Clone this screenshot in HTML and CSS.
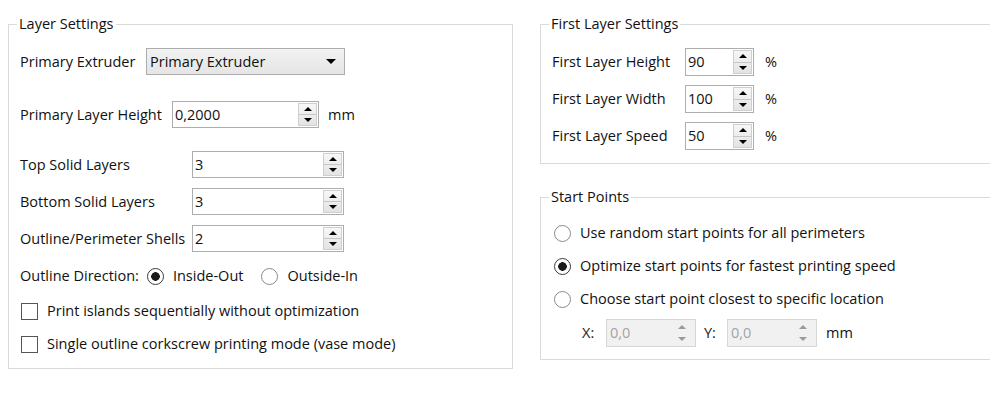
FILE: index.html
```html
<!DOCTYPE html>
<html>
<head>
    <title>Layer Settings</title>
    <meta charset="UTF-8">
    <link rel="stylesheet" href="styles.css">
</head>
<body>
    <div class="page">
        <fieldset class="group layer-group">
            <legend>Layer Settings</legend>

            <div class="row extruder-row">
                <span class="label label-extruder">Primary Extruder</span>
                <div class="combo">
                    <span class="combo-text">Primary Extruder</span>
                    <span class="combo-arrow"></span>
                </div>
            </div>

            <div class="row height-row">
                <span class="label label-height">Primary Layer Height</span>
                <div class="spin spin-height">
                    <span class="spin-value">0,2000</span>
                    <span class="spin-btns"><span class="up"></span><span class="down"></span></span>
                </div>
                <span class="unit">mm</span>
            </div>

            <div class="solid-grid">
                <span class="label">Top Solid Layers</span>
                <div class="spin">
                    <span class="spin-value">3</span>
                    <span class="spin-btns"><span class="up"></span><span class="down"></span></span>
                </div>
                <span class="label">Bottom Solid Layers</span>
                <div class="spin">
                    <span class="spin-value">3</span>
                    <span class="spin-btns"><span class="up"></span><span class="down"></span></span>
                </div>
                <span class="label">Outline/Perimeter Shells</span>
                <div class="spin">
                    <span class="spin-value">2</span>
                    <span class="spin-btns"><span class="up"></span><span class="down"></span></span>
                </div>
            </div>

            <div class="row direction-row">
                <span class="label">Outline Direction:</span>
                <span class="option"><span class="radio checked"></span>Inside-Out</span>
                <span class="option"><span class="radio"></span>Outside-In</span>
            </div>

            <div class="row check-row">
                <span class="checkbox"></span>
                <span>Print islands sequentially without optimization</span>
            </div>
            <div class="row check-row">
                <span class="checkbox"></span>
                <span>Single outline corkscrew printing mode (vase mode)</span>
            </div>
        </fieldset>

        <div class="right-col">
            <fieldset class="group first-group">
                <legend>First Layer Settings</legend>
                <div class="row first-row">
                    <span class="label label-first">First Layer Height</span>
                    <div class="spin spin-small">
                        <span class="spin-value">90</span>
                        <span class="spin-btns"><span class="up"></span><span class="down"></span></span>
                    </div>
                    <span class="unit unit-pct">%</span>
                </div>
                <div class="row first-row">
                    <span class="label label-first">First Layer Width</span>
                    <div class="spin spin-small">
                        <span class="spin-value">100</span>
                        <span class="spin-btns"><span class="up"></span><span class="down"></span></span>
                    </div>
                    <span class="unit unit-pct">%</span>
                </div>
                <div class="row first-row">
                    <span class="label label-first">First Layer Speed</span>
                    <div class="spin spin-small">
                        <span class="spin-value">50</span>
                        <span class="spin-btns"><span class="up"></span><span class="down"></span></span>
                    </div>
                    <span class="unit unit-pct">%</span>
                </div>
            </fieldset>

            <fieldset class="group start-group">
                <legend>Start Points</legend>
                <div class="row start-row">
                    <span class="option"><span class="radio"></span>Use random start points for all perimeters</span>
                </div>
                <div class="row start-row">
                    <span class="option"><span class="radio checked"></span>Optimize start points for fastest printing speed</span>
                </div>
                <div class="row start-row">
                    <span class="option"><span class="radio"></span>Choose start point closest to specific location</span>
                </div>
                <div class="row xy-row">
                    <span class="xy-label">X:</span>
                    <div class="spin spin-xy disabled">
                        <span class="spin-value">0,0</span>
                        <span class="spin-btns"><span class="up"></span><span class="down"></span></span>
                    </div>
                    <span class="xy-label xy-label-y">Y:</span>
                    <div class="spin spin-xy disabled">
                        <span class="spin-value">0,0</span>
                        <span class="spin-btns"><span class="up"></span><span class="down"></span></span>
                    </div>
                    <span class="unit">mm</span>
                </div>
            </fieldset>
        </div>
    </div>
</body>
</html>
```

FILE: styles.css
```css
* {
    box-sizing: border-box;
}

body {
    margin: 0;
    background: #ffffff;
    color: #111111;
    font-family: 'Open Sans', 'Noto Sans', sans-serif;
    font-size: 14.5px;
    line-height: 18px;
    overflow: hidden;
}

.page {
    display: flex;
    align-items: flex-start;
}

/* group boxes */
.group {
    margin: 15px 0 0;
    padding: 0 0 14px 11px;
    border: 1px solid #dadada;
    min-width: 0;
}

.group legend {
    margin-left: -3px;
    padding: 0 2px;
    line-height: 18px;
}

.layer-group {
    flex: none;
    width: 505px;
    margin-left: 8px;
}

/* the right column is cut off by the window edge */
.right-col {
    flex: none;
    width: 450px;
    margin-left: 27px;
}

.right-col .group {
    border-right: none;
}

.first-group {
    padding-bottom: 13px;
}

.start-group {
    margin-top: 24px;
    padding-bottom: 12px;
}

.row {
    display: flex;
    align-items: center;
}

.label {
    flex: none;
    white-space: nowrap;
}

/* combo box */
.extruder-row {
    margin-top: 15px;
    height: 27px;
}

.label-extruder {
    width: 126px;
}

.combo {
    display: flex;
    align-items: center;
    width: 199px;
    height: 27px;
    padding-left: 3px;
    border: 1px solid #adadad;
    background: linear-gradient(#f2f2f2, #e5e5e5);
}

.combo-arrow {
    margin-left: auto;
    margin-right: 8px;
    border-left: 5px solid transparent;
    border-right: 5px solid transparent;
    border-top: 5px solid #000000;
}

/* spin boxes */
.height-row {
    margin-top: 26px;
    height: 27px;
}

.label-height {
    width: 152px;
}

.spin {
    display: flex;
    height: 27px;
    border: 1px solid #adadad;
    background: #ffffff;
}

.spin-value {
    flex: 1;
    padding-left: 2px;
    align-self: center;
}

.spin-btns {
    display: flex;
    flex-direction: column;
    width: 19px;
    margin: 1px;
    border: 1px solid #cfcfcf;
    background: linear-gradient(#f7f7f7, #e3e3e3);
}

.spin-btns span {
    flex: 1;
    display: flex;
    align-items: center;
    justify-content: center;
}

.spin-btns .up {
    border-bottom: 1px solid #c6c6c6;
}

.spin-btns .up::before {
    content: '';
    border-left: 4px solid transparent;
    border-right: 4px solid transparent;
    border-bottom: 4px solid #000000;
}

.spin-btns .down::before {
    content: '';
    border-left: 4px solid transparent;
    border-right: 4px solid transparent;
    border-top: 4px solid #000000;
}

.spin-height {
    width: 147px;
}

.unit {
    margin-left: 9px;
}

.solid-grid {
    display: grid;
    grid-template-columns: 172px 152px;
    grid-auto-rows: 27px;
    row-gap: 10px;
    align-items: center;
    margin-top: 23px;
}

.solid-grid .spin {
    height: 27px;
}

/* radios and checkboxes */
.direction-row {
    margin-top: 14px;
    height: 20px;
}

.direction-row .label {
    margin-right: 8px;
}

.direction-row .option + .option {
    margin-left: 18px;
}

.option {
    display: flex;
    align-items: center;
    gap: 9px;
    white-space: nowrap;
}

.radio {
    flex: none;
    width: 17px;
    height: 17px;
    border: 1px solid #8a8a8a;
    border-radius: 50%;
    background: #ffffff;
}

.radio.checked {
    border-color: #3a3a3a;
    background: radial-gradient(circle, #1a1a1a 0, #1a1a1a 4px, #ffffff 4.6px);
}

.check-row {
    margin-top: 15px;
    height: 20px;
    gap: 9px;
}

.check-row + .check-row {
    margin-top: 13px;
}

.checkbox {
    flex: none;
    width: 17px;
    height: 17px;
    margin-left: 1px;
    border: 1px solid #555555;
    background: #ffffff;
}

/* first layer settings */
.first-row {
    margin-top: 9px;
    height: 28px;
}

.first-row:first-of-type {
    margin-top: 15px;
}

.label-first {
    width: 133px;
}

.spin-small {
    width: 69px;
    height: 28px;
}

.unit-pct {
    margin-left: 11px;
}

/* start points */
.start-row {
    margin-top: 13px;
    height: 20px;
    padding-left: 2px;
}

.start-row:first-of-type {
    margin-top: 17px;
}

.xy-row {
    margin-top: 10px;
    height: 28px;
    padding-left: 30px;
}

.xy-label {
    width: 24px;
    color: #222222;
}

.xy-label-y {
    width: 23px;
    margin-left: 8px;
}

.spin-xy {
    width: 90px;
    height: 28px;
}

.spin.disabled {
    border-color: #d6d6d6;
    background: #f1f1f1;
    color: #a3a3a3;
}

.spin.disabled .spin-value {
    padding-left: 3px;
}

.spin.disabled .spin-btns {
    width: 24px;
    border-color: transparent;
    background: none;
}

.spin.disabled .spin-btns .up {
    border-bottom-color: transparent;
}

.spin.disabled .up::before {
    border-bottom-color: #9a9a9a;
}

.spin.disabled .down::before {
    border-top-color: #9a9a9a;
}
```
